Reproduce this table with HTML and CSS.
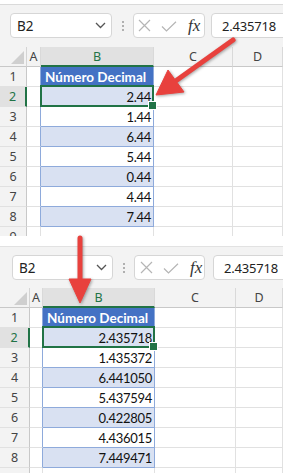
FILE: index.html
```html
<!DOCTYPE html>
<html>
<head>
<meta charset="utf-8">
<link rel="stylesheet" href="styles.css">
</head>
<body>
<div class="page">
  <section class="panel panel-top">
    <div class="strip strip-top"></div>
    <div class="toolbar">
      <div class="namebox"><span class="ref">B2</span><svg class="chev" width="11" height="7" viewBox="0 0 11 7"><path d="M1 1l4.5 4.5L10 1" fill="none" stroke="#555" stroke-width="1.3"/></svg></div>
      <div class="sep"><i></i><i></i><i></i></div>
      <div class="fxbox">
        <svg class="ico-x" width="13" height="13" viewBox="0 0 13 13"><path d="M1 1l11 11M12 1L1 12" stroke="#b5b5b5" stroke-width="1.2" fill="none"/></svg>
        <svg class="ico-ok" width="16" height="11" viewBox="0 0 16 11"><path d="M1 5.5l4.5 4.5L15 0.8" fill="none" stroke="#b5b5b5" stroke-width="1.2"/></svg>
        <span class="fx">fx</span>
      </div>
      <div class="formula">2.435718</div>
    </div>
    <div class="sheet">
      <div class="corner"><svg class="tri" width="13" height="13" viewBox="0 0 13 13"><path d="M13 0V13H0Z" fill="#cfcfcf"/></svg></div>
      <div class="ch">A</div><div class="ch on">B</div><div class="ch">C</div><div class="ch">D</div>

      <div class="rh">1</div><div class="c a"></div><div class="c b head">Número Decimal</div><div class="c"></div><div class="c"></div>
      <div class="rh on">2</div><div class="c a"></div><div class="c b num band sel">2.44</div><div class="c"></div><div class="c"></div>
      <div class="rh">3</div><div class="c a"></div><div class="c b num">1.44</div><div class="c"></div><div class="c"></div>
      <div class="rh">4</div><div class="c a"></div><div class="c b num band">6.44</div><div class="c"></div><div class="c"></div>
      <div class="rh">5</div><div class="c a"></div><div class="c b num">5.44</div><div class="c"></div><div class="c"></div>
      <div class="rh">6</div><div class="c a"></div><div class="c b num band">0.44</div><div class="c"></div><div class="c"></div>
      <div class="rh">7</div><div class="c a"></div><div class="c b num">4.44</div><div class="c"></div><div class="c"></div>
      <div class="rh">8</div><div class="c a"></div><div class="c b num band">7.44</div><div class="c"></div><div class="c"></div>
      <div class="rh">9</div><div class="c"></div><div class="c"></div><div class="c"></div><div class="c"></div>
    </div>
  </section>

  <section class="panel panel-bottom">
    <div class="strip strip-bottom"></div>
    <div class="toolbar">
      <div class="namebox"><span class="ref">B2</span><svg class="chev" width="11" height="7" viewBox="0 0 11 7"><path d="M1 1l4.5 4.5L10 1" fill="none" stroke="#555" stroke-width="1.3"/></svg></div>
      <div class="sep"><i></i><i></i><i></i></div>
      <div class="fxbox">
        <svg class="ico-x" width="13" height="13" viewBox="0 0 13 13"><path d="M1 1l11 11M12 1L1 12" stroke="#b5b5b5" stroke-width="1.2" fill="none"/></svg>
        <svg class="ico-ok" width="16" height="11" viewBox="0 0 16 11"><path d="M1 5.5l4.5 4.5L15 0.8" fill="none" stroke="#b5b5b5" stroke-width="1.2"/></svg>
        <span class="fx">fx</span>
      </div>
      <div class="formula">2.435718</div>
    </div>
    <div class="sheet">
      <div class="corner"><svg class="tri" width="13" height="13" viewBox="0 0 13 13"><path d="M13 0V13H0Z" fill="#cfcfcf"/></svg></div>
      <div class="ch">A</div><div class="ch on">B</div><div class="ch">C</div><div class="ch">D</div>

      <div class="rh">1</div><div class="c a"></div><div class="c b head">Número Decimal</div><div class="c"></div><div class="c"></div>
      <div class="rh on">2</div><div class="c a"></div><div class="c b num band sel">2.435718</div><div class="c"></div><div class="c"></div>
      <div class="rh">3</div><div class="c a"></div><div class="c b num">1.435372</div><div class="c"></div><div class="c"></div>
      <div class="rh">4</div><div class="c a"></div><div class="c b num band">6.441050</div><div class="c"></div><div class="c"></div>
      <div class="rh">5</div><div class="c a"></div><div class="c b num">5.437594</div><div class="c"></div><div class="c"></div>
      <div class="rh">6</div><div class="c a"></div><div class="c b num band">0.422805</div><div class="c"></div><div class="c"></div>
      <div class="rh">7</div><div class="c a"></div><div class="c b num">4.436015</div><div class="c"></div><div class="c"></div>
      <div class="rh">8</div><div class="c a"></div><div class="c b num band">7.449471</div><div class="c"></div><div class="c"></div>
      <div class="rh"></div><div class="c"></div><div class="c"></div><div class="c"></div><div class="c"></div>
    </div>
  </section>

  <svg class="arrows" width="283" height="473" viewBox="0 0 283 473">
    <g fill="#e8413d" stroke="#e8413d">
      <line x1="233" y1="40" x2="177" y2="80" stroke-width="5" stroke-linecap="round"/>
      <polygon points="156,95 168,70 184,92" stroke-width="1" stroke-linejoin="round"/>
      <line x1="80" y1="238" x2="80" y2="281" stroke-width="5" stroke-linecap="round"/>
      <polygon points="69,279 91,279 80,303" stroke-width="1" stroke-linejoin="round"/>
    </g>
  </svg>
</div>
</body>
</html>
```

FILE: styles.css
```css
* { box-sizing: border-box; margin: 0; padding: 0; }
html, body { width: 283px; height: 473px; overflow: hidden; background: #fff; }
body { font-family: "Noto Sans", "Open Sans", sans-serif; color: #222; }

.page { position: relative; width: 283px; height: 473px; }

.panel { display: flex; flex-direction: column; overflow: hidden; }
.panel-top { height: 236px; }
.panel-bottom { height: 237px; }

.strip { flex: none; background: #fff; }
.strip-top { height: 5px; border-bottom: 1px solid #dadada; }
.strip-bottom { height: 11px; border-bottom: 1px solid #e2e2e2; }

.toolbar {
  flex: none;
  display: flex;
  align-items: flex-start;
  background: #f3f3f3;
  padding-top: 8px;
}
.panel-top .toolbar { height: 42px; padding-left: 10px; }
.panel-bottom .toolbar { height: 41px; padding-left: 12px; }

.namebox {
  flex: none;
  width: 102px;
  height: 25px;
  background: #fff;
  border: 1px solid #d6d6d6;
  border-radius: 4px;
  display: flex;
  align-items: center;
  justify-content: space-between;
  padding: 0 5px 0 6px;
}
.panel-bottom .namebox { width: 101px; }
.ref { font-size: 13.5px; color: #222; }

.sep {
  flex: none;
  width: 21px;
  height: 25px;
  display: flex;
  flex-direction: column;
  align-items: center;
  justify-content: center;
  gap: 2px;
}
.sep i { display: block; width: 2px; height: 2px; background: #9a9a9a; border-radius: 1px; }

.fxbox {
  flex: none;
  width: 72px;
  height: 25px;
  background: #fff;
  border: 1px solid #d6d6d6;
  border-radius: 4px;
  display: flex;
  align-items: center;
  padding-left: 4px;
  gap: 10px;
}
.panel-bottom .fxbox { width: 71px; padding-left: 5px; }
.ico-ok { margin-top: 1px; }
.fx {
  font-family: "Liberation Serif", "DejaVu Serif", serif;
  font-style: italic;
  font-size: 17px;
  color: #333;
  margin-left: 1px;
  line-height: 1;
}

.formula {
  flex: none;
  width: 100px;
  height: 25px;
  margin-left: 6px;
  background: #fff;
  border: 1px solid #d6d6d6;
  border-radius: 4px;
  display: flex;
  align-items: center;
  padding-left: 10px;
  font-size: 13px;
  letter-spacing: -0.2px;
  color: #222;
}
.panel-bottom .formula { margin-left: 8px; }

.sheet { flex: none; display: grid; grid-template-rows: repeat(10, 20px); }
.panel-top .sheet { grid-template-columns: 27px 14px 113px 79px 50px; }
.panel-bottom .sheet { grid-template-columns: 30px 13px 112px 81px 47px; }

.corner {
  position: relative;
  background: #f3f3f3;
  border-right: 1px solid #d4d4d4;
  border-bottom: 1px solid #c8c8c8;
}
.tri { position: absolute; right: 2px; bottom: 2px; }

.ch {
  background: #f3f3f3;
  border-right: 1px solid #d9d9d9;
  border-bottom: 1px solid #c8c8c8;
  display: flex;
  align-items: center;
  justify-content: center;
  font-size: 12.5px;
  color: #444;
}
.ch.on { background: #e1e1e1; color: #217346; border-bottom: 2px solid #217346; }

.rh {
  background: #f3f3f3;
  border-right: 1px solid #c8c8c8;
  border-bottom: 1px solid #e1e1e1;
  display: flex;
  align-items: center;
  justify-content: center;
  font-size: 12.5px;
  color: #444;
}
.rh.on { background: #e1e1e1; color: #217346; border-right: 2px solid #217346; }

.c {
  border-right: 1px solid #e1e1e1;
  border-bottom: 1px solid #e1e1e1;
  font-family: "Lato", "Liberation Sans", sans-serif;
  font-size: 13px;
  color: #111;
  white-space: nowrap;
  overflow: hidden;
}
.c.a { border-right-color: #8eaadb; }
.c.b { border-right-color: #8eaadb; border-bottom-color: #8eaadb; }
.c.band { background: #d9e1f2; }
.c.head {
  background: #4472c4;
  color: #fff;
  font-weight: 700;
  font-size: 13.5px;
  display: flex;
  align-items: center;
  padding-left: 4px;
}
.c.num {
  display: flex;
  align-items: center;
  justify-content: flex-end;
  padding-right: 2px;
  letter-spacing: -0.3px;
}
.c.sel { position: relative; overflow: visible; }
.c.sel::after {
  content: "";
  position: absolute;
  left: -1px;
  top: -2px;
  right: -1px;
  bottom: -1px;
  border: 2px solid #217346;
}
.c.sel::before {
  content: "";
  position: absolute;
  right: -4px;
  bottom: -4px;
  width: 7px;
  height: 7px;
  background: #217346;
  border: 1px solid #fff;
  z-index: 2;
}

.arrows {
  position: absolute;
  left: 0;
  top: 0;
  pointer-events: none;
  filter: drop-shadow(1px 1px 1.5px rgba(0, 0, 0, 0.35));
}
```
